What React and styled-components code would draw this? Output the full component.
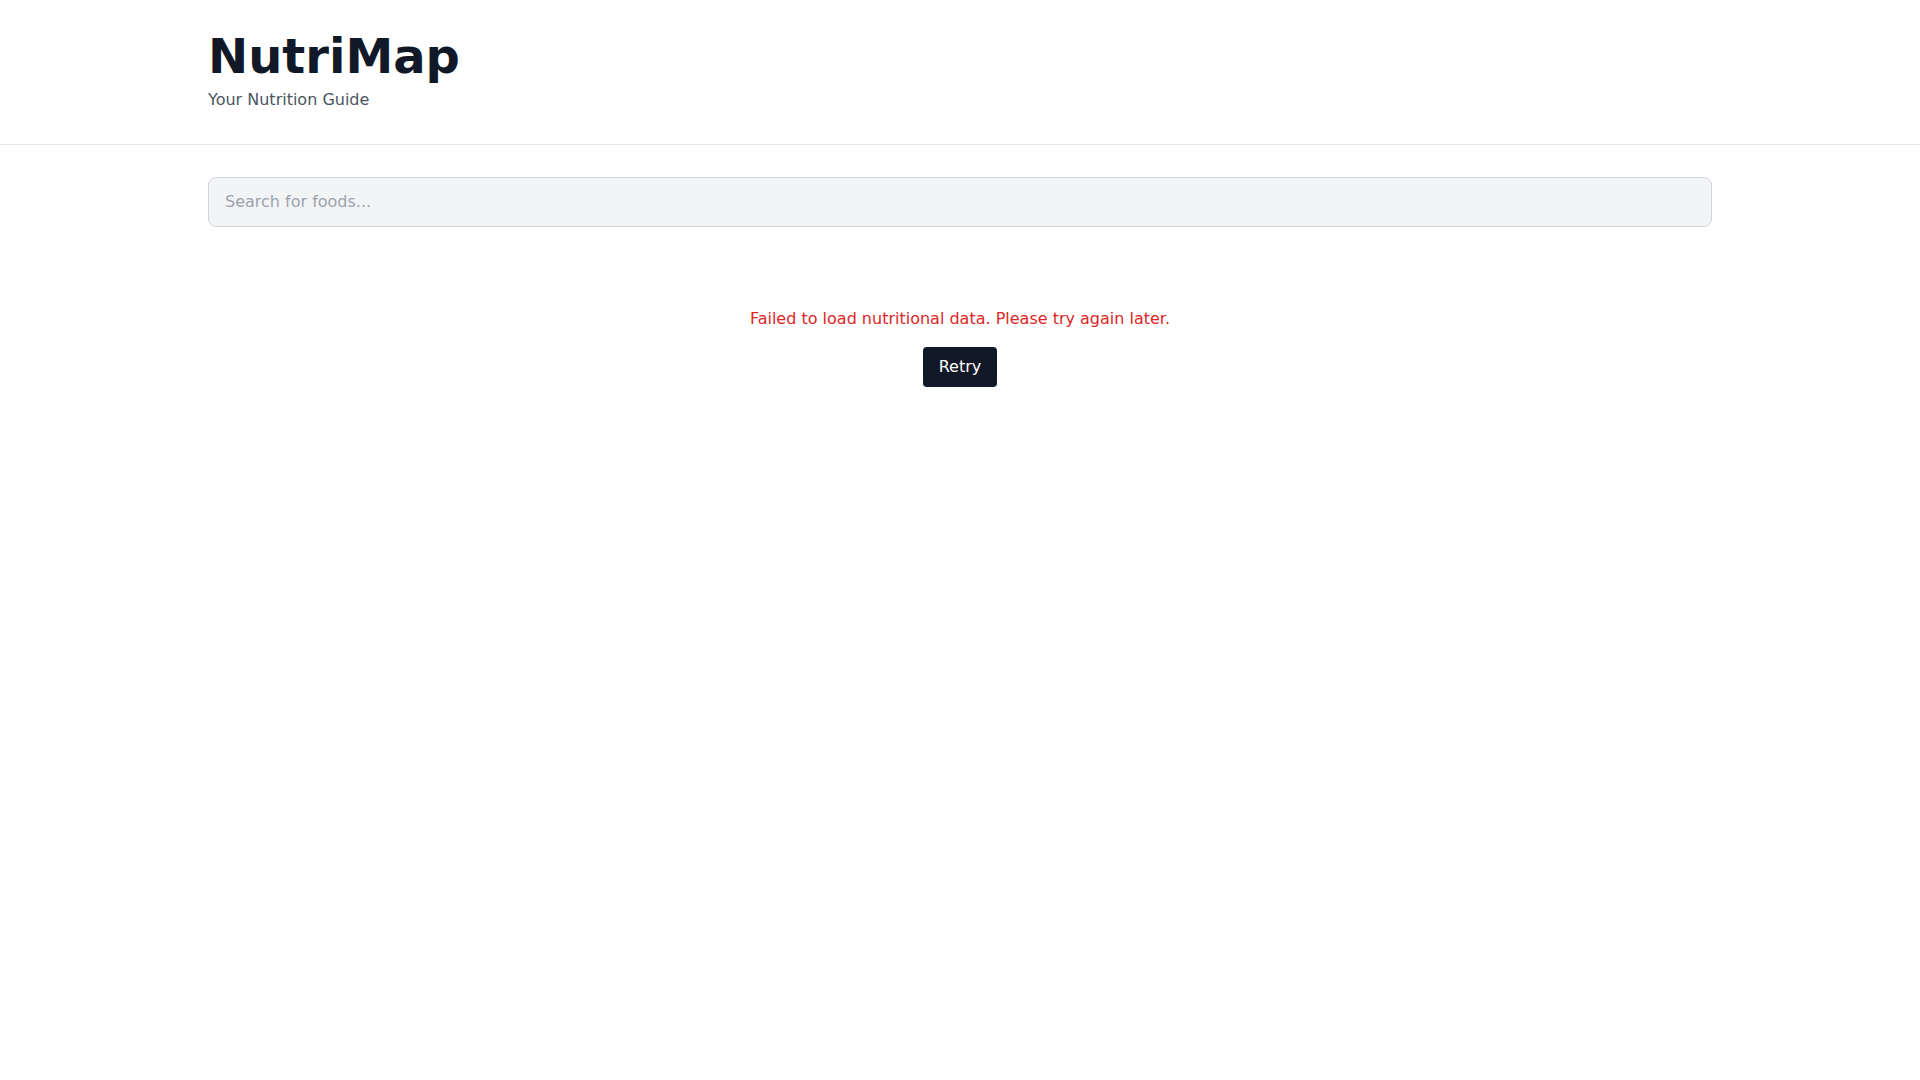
import React from 'react';
import styled, { createGlobalStyle } from 'styled-components';

const GlobalStyle = createGlobalStyle`
  * {
    box-sizing: border-box;
  }
  body {
    margin: 0;
    background: #ffffff;
    font-family: "DejaVu Sans", "Noto Sans", sans-serif;
    color: #111827;
  }
`;

const Header = styled.header`
  border-bottom: 1px solid #e5e7eb;
`;

const Container = styled.div`
  max-width: 1536px;
  margin: 0 auto;
  padding: ${(props) => props.$py || '0'} 16px;
`;

const Title = styled.h1`
  margin: 0;
  font-size: 48px;
  line-height: 1;
  font-weight: 700;
  color: #111827;
`;

const Subtitle = styled.p`
  margin: 8px 0 0;
  font-size: 16px;
  line-height: 24px;
  color: #4b5563;
`;

const SearchInput = styled.input`
  display: block;
  width: 100%;
  padding: 12px 16px;
  font-family: inherit;
  font-size: 16px;
  line-height: 24px;
  color: #111827;
  background: #f3f4f6;
  border: 1px solid #d1d5db;
  border-radius: 8px;
  outline: none;
  &::placeholder {
    color: #9ca3af;
  }
`;

const ErrorBlock = styled.div`
  display: flex;
  flex-direction: column;
  align-items: center;
  padding: 80px 0;
`;

const ErrorText = styled.p`
  margin: 0 0 16px;
  font-size: 16px;
  line-height: 24px;
  color: #dc2626;
`;

const RetryButton = styled.button`
  padding: 8px 16px;
  font-family: inherit;
  font-size: 16px;
  line-height: 24px;
  color: #ffffff;
  background: #111827;
  border: none;
  border-radius: 4px;
  cursor: pointer;
  &:hover {
    background: #1f2937;
  }
`;

const App = () => {
  return (
    <>
      <GlobalStyle />
      <Header>
        <Container $py="32px">
          <Title>NutriMap</Title>
          <Subtitle>Your Nutrition Guide</Subtitle>
        </Container>
      </Header>
      <main>
        <Container $py="32px">
          <SearchInput type="text" placeholder="Search for foods..." />
          <ErrorBlock>
            <ErrorText>Failed to load nutritional data. Please try again later.</ErrorText>
            <RetryButton>Retry</RetryButton>
          </ErrorBlock>
        </Container>
      </main>
    </>
  );
};

export default App;
